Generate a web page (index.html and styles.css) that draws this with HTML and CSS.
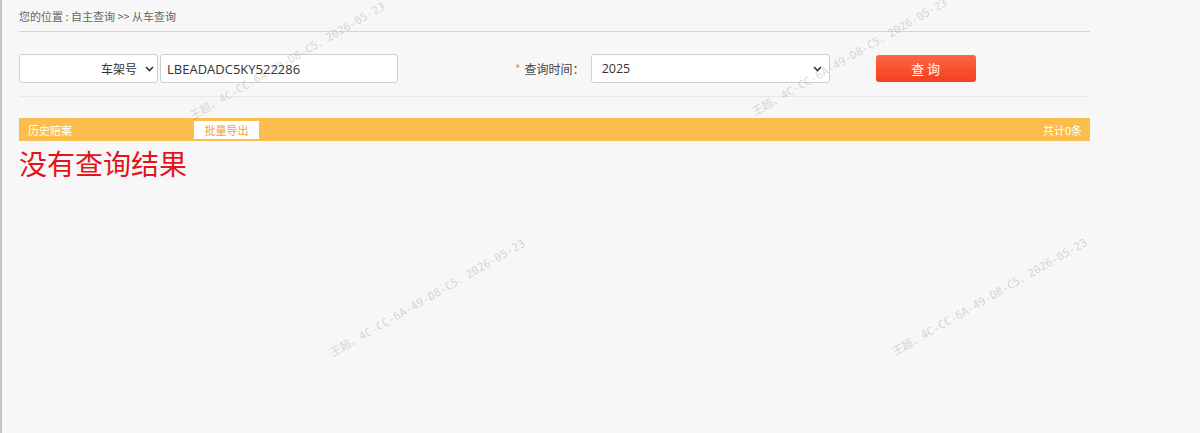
FILE: index.html
```html
<!DOCTYPE html>
<html lang="zh-CN">
<head>
  <meta charset="UTF-8">
  <title>从车查询</title>
  <link rel="stylesheet" href="styles.css">
</head>
<body>
  <div class="page">
    <!-- 当前位置 -->
    <div class="crumb">您的位置 : 自主查询 &gt;&gt; 从车查询</div>

    <!-- 查询条件 -->
    <div class="search">
      <div class="select select-type">
        <span class="select-text">车架号</span>
        <svg class="arrow" width="9" height="6" viewBox="0 0 9 6"><path d="M1 1l3.5 3.5L8 1" fill="none" stroke="#333" stroke-width="1.6"/></svg>
      </div>
      <input class="vin" type="text" value="LBEADADC5KY522286">

      <label class="time-label"><em>*</em>查询时间：</label>
      <div class="select select-year">
        <span class="select-text">2025</span>
        <svg class="arrow" width="9" height="6" viewBox="0 0 9 6"><path d="M1 1l3.5 3.5L8 1" fill="none" stroke="#333" stroke-width="1.6"/></svg>
      </div>
      <button class="btn-search" type="button">查 询</button>
    </div>

    <!-- 结果 -->
    <div class="bar">
      <span class="bar-title">历史赔案</span>
      <button class="btn-export" type="button">批量导出</button>
      <span class="bar-total">共计0条</span>
    </div>
    <div class="empty">没有查询结果</div>
  </div>

  <!-- 水印 -->
  <div class="watermarks">
    <span class="wm wm-1">王超、4C-CC-6A-49-D8-C5、2026-05-23</span>
    <span class="wm wm-2">王超、4C-CC-6A-49-D8-C5、2026-05-23</span>
    <span class="wm wm-3">王超、4C-CC-6A-49-D8-C5、2026-05-23</span>
    <span class="wm wm-4">王超、4C-CC-6A-49-D8-C5、2026-05-23</span>
  </div>
</body>
</html>
```

FILE: styles.css
```css
html, body {
  height: 100%;
}
body {
  margin: 0;
  background: #f7f7f7;
  border-left: 2px solid #c4c4c4;
  font-family: "Noto Sans CJK SC", "Noto Sans", sans-serif;
  color: #333;
  overflow: hidden;
}
.page {
  width: 1071px;
  padding-left: 17px;
}
.crumb {
  padding: 8px 0 7px;
  line-height: 16px;
  font-size: 11px;
  color: #666;
  border-bottom: 1px solid #d6d6d6;
}
.search {
  display: flex;
  align-items: center;
  padding: 22px 0 13px;
  border-bottom: 1px solid #e8e8e8;
}
.select {
  box-sizing: border-box;
  height: 29px;
  display: flex;
  align-items: center;
  background: #fff;
  border: 1px solid #cfcfcf;
  border-radius: 3px;
  font-size: 12px;
}
.select-type {
  width: 139px;
  justify-content: flex-end;
  padding-right: 3px;
}
.select-type .select-text {
  margin-right: 8px;
}
.select-year {
  width: 239px;
  padding: 0 7px 0 10px;
  font-family: "Open Sans", sans-serif;
  font-size: 12.5px;
}
.select-year .select-text {
  flex: 1;
}
.arrow {
  display: block;
}
.vin {
  box-sizing: border-box;
  width: 238px;
  height: 29px;
  margin: 0 0 0 2px;
  padding: 0 6px;
  border: 1px solid #cfcfcf;
  border-radius: 3px;
  background: #fff;
  font-family: "Open Sans", sans-serif;
  font-size: 13px;
  color: #333;
}
.time-label {
  margin-left: 117px;
  margin-right: 6px;
  font-size: 12px;
  color: #444;
}
.time-label em {
  font-style: normal;
  color: #f39800;
  margin-right: 4px;
}
.btn-search {
  width: 100px;
  height: 27px;
  margin-left: 46px;
  border: none;
  border-radius: 3px;
  background: linear-gradient(#ff6544, #f2401d);
  color: #fff;
  font-family: inherit;
  font-size: 13px;
  padding: 0;
}
.bar {
  display: flex;
  align-items: center;
  height: 23px;
  margin-top: 21px;
  padding: 0 8px 0 9px;
  background: #fbbd4b;
  color: #fff;
  font-size: 11px;
}
.bar-title {
  width: 166px;
}
.btn-export {
  width: 65px;
  height: 18px;
  padding: 0;
  border: none;
  background: #fff;
  color: #f0a23a;
  font-family: inherit;
  font-size: 11px;
}
.bar-total {
  margin-left: auto;
}
.empty {
  margin-top: 4px;
  line-height: 36px;
  font-size: 28px;
  color: #e4141c;
}
.watermarks {
  position: absolute;
  top: 0;
  left: 0;
  width: 100%;
  height: 100%;
  pointer-events: none;
}
.wm {
  position: absolute;
  white-space: nowrap;
  transform: translate(-50%, -50%) rotate(-30deg);
  font-family: "DejaVu Sans Mono", "Noto Sans CJK SC", monospace;
  font-size: 11px;
  color: rgba(110, 110, 110, 0.28);
}
.wm-1 { left: 287px; top: 60px; }
.wm-2 { left: 849px; top: 56px; }
.wm-3 { left: 427px; top: 297px; }
.wm-4 { left: 989px; top: 296px; }
```
